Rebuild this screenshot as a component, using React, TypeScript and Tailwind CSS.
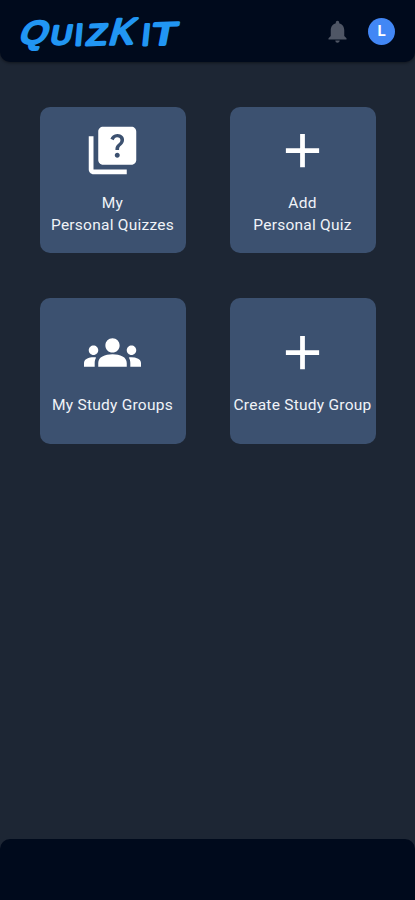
import React from "react";
import { MdAdd, MdGroups, MdNotifications, MdQuiz } from "react-icons/md";

const logoLetters = [
  { char: "Q", size: 33, transform: "translate(17.5 43) rotate(2) skewX(-20) scale(1.04 0.98)" },
  { char: "U", size: 26, transform: "translate(49.5 44.5) rotate(-3) skewX(-14) scale(1.12 1)" },
  { char: "I", size: 30, transform: "translate(74 44.5) skewX(-5)" },
  { char: "Z", size: 29, transform: "translate(85.5 45) rotate(-2) skewX(-12) scale(1.12 1)" },
  { char: "K", size: 37, transform: "translate(107.5 44.5) rotate(-2) skewX(-18) scale(1 0.98)" },
  { char: "I", size: 30, transform: "translate(141 44.5) skewX(-6)" },
  { char: "T", size: 31, transform: "translate(150 45) rotate(-2) skewX(-13) scale(1.32 1)" },
];

const Logo: React.FC = () => {
  return (
    <svg
      width="190"
      height="62"
      viewBox="0 0 190 62"
      role="img"
      aria-label="QuizKit"
      className="shrink-0 font-['Liberation_Sans',sans-serif]"
    >
      {logoLetters.map((letter, i) => (
        <text
          key={i}
          transform={letter.transform}
          fontSize={letter.size}
          fill="#2196f3"
          stroke="#2196f3"
          strokeWidth="2.9"
          strokeLinejoin="round"
          strokeLinecap="round"
        >
          {letter.char}
        </text>
      ))}
    </svg>
  );
};

interface TileProps {
  icon: React.ReactNode;
  lines: string[];
}

const Tile: React.FC<TileProps> = ({ icon, lines }) => {
  return (
    <button className="flex h-[146px] w-[146px] flex-col items-center justify-center gap-[13px] rounded-[10px] bg-[#3c5170] pr-px pb-[2px] text-white">
      {icon}
      <span className="flex flex-col text-[15.5px] leading-[22px] tracking-[0.25px] whitespace-nowrap text-[#f0f3f8]">
        {lines.map((line) => (
          <span key={line}>{line}</span>
        ))}
      </span>
    </button>
  );
};

const App: React.FC = () => {
  return (
    <div className="flex h-screen w-full flex-col bg-[#1d2634] font-['Roboto',sans-serif]">
      <header className="flex h-[62px] shrink-0 items-center justify-between rounded-b-[10px] bg-[#000a1c] pr-5 shadow-[0_1px_3px_rgba(0,0,0,0.45)]">
        <Logo />
        <div className="flex items-center gap-[17px]">
          <MdNotifications size={27} className="text-[#4f5665]" />
          <div className="flex h-[27px] w-[27px] items-center justify-center rounded-full bg-[#4287f5] text-[15px] font-bold text-white">
            L
          </div>
        </div>
      </header>
      <main className="grid flex-1 grid-cols-[146px_146px] content-start gap-x-[44px] gap-y-[45px] pt-[45px] pl-10">
        <Tile icon={<MdQuiz size={57} />} lines={["My", "Personal Quizzes"]} />
        <Tile icon={<MdAdd size={57} />} lines={["Add", "Personal Quiz"]} />
        <Tile icon={<MdGroups size={57} />} lines={["My Study Groups"]} />
        <Tile icon={<MdAdd size={57} />} lines={["Create Study Group"]} />
      </main>
      <footer className="h-[61px] shrink-0 rounded-t-[10px] bg-[#000a1c]" />
    </div>
  );
};

export default App;
